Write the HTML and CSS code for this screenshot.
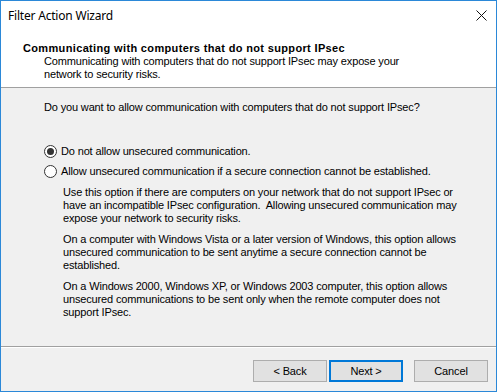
FILE: index.html
```html
<!DOCTYPE html>
<html lang="en">
<head>
    <meta charset="UTF-8">
    <title>Filter Action Wizard</title>
    <link rel="stylesheet" href="styles.css">
</head>
<body>
    <div class="window">
        <div class="titlebar">
            <span class="title">Filter Action Wizard</span>
            <svg class="close" width="11" height="11" viewBox="0 0 11 11">
                <path d="M0.5 0.5 L10.5 10.5 M10.5 0.5 L0.5 10.5" stroke="#111" stroke-width="1" fill="none"/>
            </svg>
        </div>

        <div class="header">
            <div class="header-title">Communicating with computers that do not support IPsec</div>
            <div class="header-sub">Communicating with computers that do not support IPsec may expose your<br>network to security risks.</div>
        </div>

        <div class="content">
            <p class="question">Do you want to allow communication with computers that do not support IPsec?</p>

            <label class="radio">
                <span class="dot checked"></span>
                Do not allow unsecured communication.
            </label>
            <label class="radio">
                <span class="dot"></span>
                Allow unsecured communication if a secure connection cannot be established.
            </label>

            <div class="notes">
                <p>Use this option if there are computers on your network that do not support IPsec or<br>have an incompatible IPsec configuration.&nbsp; Allowing unsecured communication may<br>expose your network to security risks.</p>
                <p>On a computer with Windows Vista or a later version of Windows, this option allows<br>unsecured communication to be sent anytime a secure connection cannot be<br>established.</p>
                <p>On a Windows 2000, Windows XP, or Windows 2003 computer, this option allows<br>unsecured communications to be sent only when the remote computer does not<br>support IPsec.</p>
            </div>
        </div>

        <div class="footer">
            <button class="btn">&lt; Back</button>
            <button class="btn default">Next &gt;</button>
            <button class="btn cancel">Cancel</button>
        </div>
    </div>
</body>
</html>
```
FILE: styles.css
```css
body {
    margin: 0;
    font-family: "Liberation Sans", Arial, sans-serif;
    font-size: 11px;
    letter-spacing: -0.15px;
    color: #000;
}
.window {
    width: 495px;
    height: 390px;
    border: 1px solid #2b88d8;
    background-color: #f0f0f0;
    display: flex;
    flex-direction: column;
}
.titlebar {
    height: 30px;
    background-color: white;
    display: flex;
    align-items: center;
    justify-content: space-between;
    padding: 0 9px 0 7px;
}
.title {
    font-family: "Noto Sans", sans-serif;
    font-size: 12px;
    letter-spacing: -0.2px;
    margin-top: -2px;
}
.close {
    margin-top: -2px;
}
.header {
    height: 57px;
    background-color: white;
    border-bottom: 1px solid #a0a0a0;
    padding-left: 22px;
    box-sizing: border-box;
}
.header-title {
    font-weight: bold;
    letter-spacing: 0.35px;
    line-height: 13px;
    padding-top: 11px;
}
.header-sub {
    line-height: 13px;
    padding-left: 21px;
}
.content {
    flex: 1;
    padding: 13px 0 0 43px;
    border-bottom: 1px solid #a0a0a0;
    box-shadow: 0 1px 0 white;
}
.content p {
    margin: 0;
    line-height: 13px;
}
.question {
    margin-bottom: 27px !important;
}
.radio {
    display: flex;
    align-items: center;
    height: 20px;
    gap: 4px;
}
.dot {
    width: 11px;
    height: 11px;
    border: 1px solid #333;
    border-radius: 50%;
    background-color: white;
    position: relative;
}
.dot.checked::after {
    content: "";
    position: absolute;
    top: 2px;
    left: 2px;
    width: 7px;
    height: 7px;
    border-radius: 50%;
    background-color: #333;
}
.notes {
    padding: 5px 0 0 19px;
}
.notes p {
    margin-bottom: 8px;
}
.footer {
    height: 44px;
    display: flex;
    align-items: flex-start;
    justify-content: flex-end;
    padding: 13px 8px 0 0;
    box-sizing: border-box;
}
.btn {
    width: 74px;
    height: 22px;
    font-family: "Liberation Sans", Arial, sans-serif;
    font-size: 11px;
    letter-spacing: -0.15px;
    background-color: #e1e1e1;
    border: 1px solid #adadad;
    padding: 0;
    margin-left: 2px;
}
.btn.default {
    border: 2px solid #0078d7;
}
.btn.cancel {
    margin-left: 11px;
}
```
